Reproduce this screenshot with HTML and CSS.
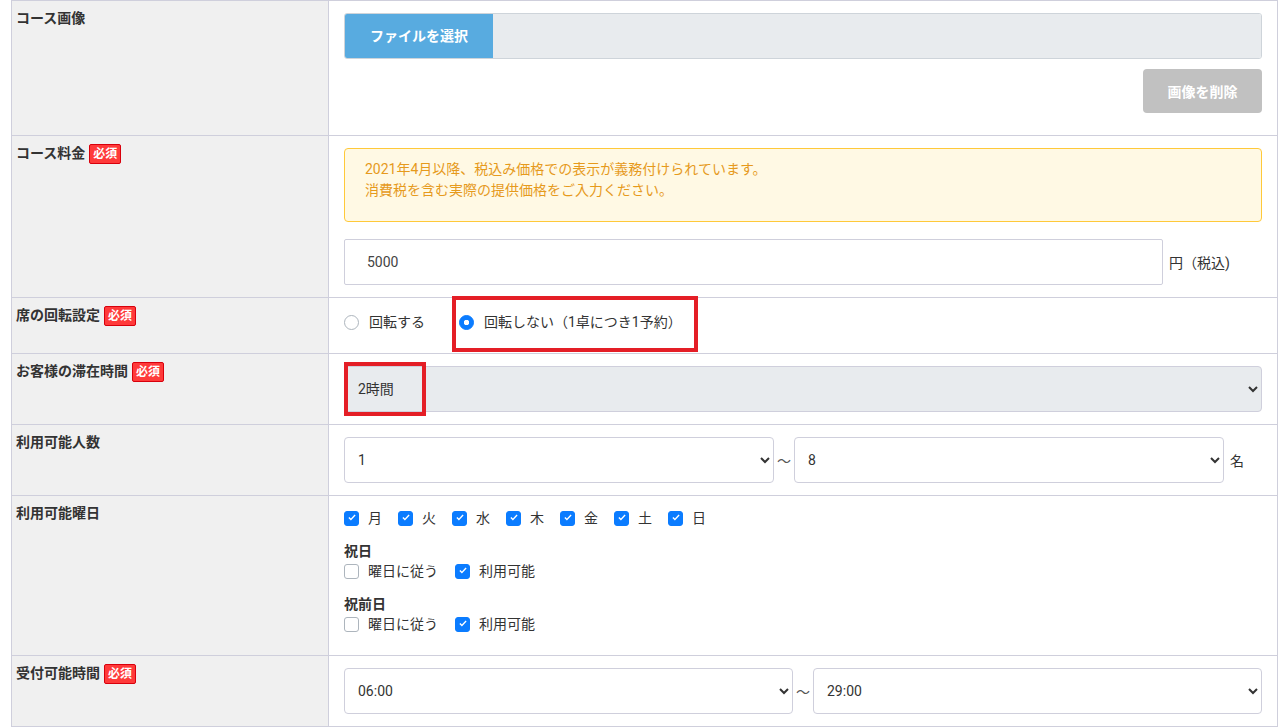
FILE: index.html
```html
<!DOCTYPE html>
<html lang="ja">

<head>
    <meta charset="UTF-8">
    <meta name="viewport" content="width=device-width, initial-scale=1.0">
    <title>コース設定</title>
    <link rel="stylesheet" href="styles.css">
</head>

<body>
    <table class="formTable">
        <tr>
            <th>コース画像</th>
            <td class="cellImage">
                <div class="fileBox">
                    <span class="fileBtn">ファイルを選択</span>
                    <span class="fileName"></span>
                </div>
                <div class="btnRow">
                    <button type="button" class="delBtn">画像を削除</button>
                </div>
            </td>
        </tr>
        <tr>
            <th>コース料金<span class="must">必須</span></th>
            <td>
                <div class="alert">
                    2021年4月以降、税込み価格での表示が義務付けられています。<br>
                    消費税を含む実際の提供価格をご入力ください。
                </div>
                <div class="priceRow">
                    <input type="text" class="textInput" value="5000">
                    <span class="unit">円（税込)</span>
                </div>
            </td>
        </tr>
        <tr>
            <th>席の回転設定<span class="must">必須</span></th>
            <td class="cellRadio">
                <div class="radios">
                    <label class="radio"><input type="radio" name="turn">回転する</label>
                    <label class="radio marked"><input type="radio" name="turn" checked>回転しない（1卓につき1予約）</label>
                </div>
            </td>
        </tr>
        <tr>
            <th>お客様の滞在時間<span class="must">必須</span></th>
            <td>
                <div class="selWrap marked">
                    <select class="sel" disabled>
                        <option>2時間</option>
                    </select>
                </div>
            </td>
        </tr>
        <tr>
            <th>利用可能人数</th>
            <td>
                <div class="range">
                    <select class="sel half">
                        <option>1</option>
                    </select>
                    <span class="tilde">〜</span>
                    <select class="sel half">
                        <option>8</option>
                    </select>
                    <span class="unit">名</span>
                </div>
            </td>
        </tr>
        <tr>
            <th>利用可能曜日</th>
            <td class="cellDays">
                <div class="checks days">
                    <label class="check"><input type="checkbox" checked>月</label>
                    <label class="check"><input type="checkbox" checked>火</label>
                    <label class="check"><input type="checkbox" checked>水</label>
                    <label class="check"><input type="checkbox" checked>木</label>
                    <label class="check"><input type="checkbox" checked>金</label>
                    <label class="check"><input type="checkbox" checked>土</label>
                    <label class="check"><input type="checkbox" checked>日</label>
                </div>
                <div class="sub">
                    <p class="subTitle">祝日</p>
                    <div class="checks">
                        <label class="check"><input type="checkbox">曜日に従う</label>
                        <label class="check"><input type="checkbox" checked>利用可能</label>
                    </div>
                </div>
                <div class="sub">
                    <p class="subTitle">祝前日</p>
                    <div class="checks">
                        <label class="check"><input type="checkbox">曜日に従う</label>
                        <label class="check"><input type="checkbox" checked>利用可能</label>
                    </div>
                </div>
            </td>
        </tr>
        <tr>
            <th>受付可能時間<span class="must">必須</span></th>
            <td>
                <div class="range">
                    <select class="sel">
                        <option>06:00</option>
                    </select>
                    <span class="tilde">〜</span>
                    <select class="sel">
                        <option>29:00</option>
                    </select>
                </div>
            </td>
        </tr>
    </table>
</body>

</html>
```

FILE: styles.css
```css
* {
    margin: 0;
    padding: 0;
    box-sizing: border-box;
}

body {
    padding: 0 7px 0 11px;
    font-family: Roboto, "Noto Sans CJK JP", sans-serif;
    font-size: 14px;
    color: #333;
    background: #fff;
    text-spacing-trim: space-all;
}

.formTable {
    width: 100%;
    border-collapse: collapse;
    table-layout: fixed;
}

.formTable th,
.formTable td {
    border: 1px solid #cfcfdc;
    vertical-align: top;
    text-align: left;
}

.formTable th {
    width: 317px;
    padding: 7px 4px;
    background: #f0f0f0;
    font-weight: bold;
    line-height: 20px;
    color: #333;
}

.formTable td {
    padding: 12px 15px;
}

.must {
    display: inline-block;
    margin-left: 4px;
    padding: 0 3px;
    height: 20px;
    line-height: 18px;
    vertical-align: top;
    margin-top: 1px;
    font-size: 12px;
    font-weight: bold;
    color: #fff;
    background: #ff3a3a;
    border: 1px solid #d8000c;
    border-radius: 2px;
}

/* 画像 */
.fileBox {
    display: flex;
    height: 46px;
    border: 1px solid #ced4da;
    border-radius: 3px;
    overflow: hidden;
}

.fileBtn {
    width: 148px;
    background: #58abe0;
    color: #fff;
    font-weight: bold;
    line-height: 44px;
    text-align: center;
}

.fileName {
    flex: 1;
    background: #e8ebee;
}

.btnRow {
    display: flex;
    justify-content: flex-end;
    margin-top: 10px;
    margin-bottom: 10px;
}

.delBtn {
    width: 119px;
    height: 44px;
    border: 0;
    border-radius: 4px;
    background: #c1c1c1;
    color: #fff;
    font-family: inherit;
    font-size: 14px;
    font-weight: bold;
}

/* 料金 */
.alert {
    padding: 10px 20px 20px;
    line-height: 21px;
    color: #e69a1c;
    background: #fff9e4;
    border: 1px solid #ffc93a;
    border-radius: 4px;
}

.priceRow {
    display: flex;
    align-items: center;
    margin-top: 17px;
}

.textInput {
    width: 819px;
    height: 46px;
    padding: 0 22px;
    border: 1px solid #cfcfdc;
    border-radius: 2px;
    font-family: inherit;
    font-size: 14px;
    color: #444;
}

.unit {
    margin-left: 6px;
}

/* ラジオ */
.cellRadio {
    padding-top: 14px !important;
    padding-bottom: 21px !important;
}

.radios {
    display: flex;
    gap: 34px;
}

.radio {
    display: inline-flex;
    align-items: center;
    line-height: 20px;
}

.radio input {
    appearance: none;
    width: 15px;
    height: 15px;
    margin: 0 10px 0 0;
    border: 1px solid #adb5bd;
    border-radius: 50%;
    background: #fff;
}

.radio input:checked {
    border-color: #0b7cff;
    background: radial-gradient(circle, #fff 0 2.5px, #0b7cff 3px);
}

.marked {
    position: relative;
}

.radio.marked::after {
    content: "";
    position: absolute;
    left: -7px;
    right: -16px;
    top: -16px;
    bottom: -20px;
    border: 4px solid #e41e26;
}

.selWrap.marked::after {
    content: "";
    position: absolute;
    left: 0;
    top: -4px;
    width: 74px;
    height: 46px;
    border: 4px solid #e41e26;
}

/* セレクト */
.sel {
    display: block;
    width: 100%;
    height: 46px;
    padding: 0 12px 0 9px;
    border: 1px solid #cfcfdc;
    border-radius: 4px;
    background: #fff;
    font-family: inherit;
    font-size: 14px;
    color: #333;
}

.sel:disabled {
    background: #e8ebee;
    color: #333;
    opacity: 1;
}

.range {
    display: flex;
    align-items: center;
}

.range .sel {
    flex: 1;
}

.range .sel.half {
    flex: none;
    width: 430px;
}

.tilde {
    margin: 0 3px;
    color: #555;
}

/* 曜日 */
.cellDays {
    padding-bottom: 21px !important;
}

.checks {
    display: flex;
    line-height: 20px;
}

.check {
    display: inline-flex;
    align-items: center;
    margin-right: 17px;
}

.days .check {
    width: 54px;
    margin-right: 0;
}

.check input {
    appearance: none;
    width: 15px;
    height: 15px;
    margin: 0 9px 0 0;
    border: 1px solid #adb5bd;
    border-radius: 3px;
    background: #fff;
}

.check input:checked {
    border-color: #0b7cff;
    background: #0b7cff url("data:image/svg+xml,%3Csvg xmlns='http://www.w3.org/2000/svg' viewBox='0 0 8 8'%3E%3Cpath fill='%23fff' d='M6.6.6 2.9 4.5 1.4 3 .4 4l2.5 2.6L7.6 1.6z'/%3E%3C/svg%3E") center / 8px 8px no-repeat;
}

.sub {
    margin-top: 13px;
}

.subTitle {
    font-weight: bold;
    line-height: 20px;
}
```
